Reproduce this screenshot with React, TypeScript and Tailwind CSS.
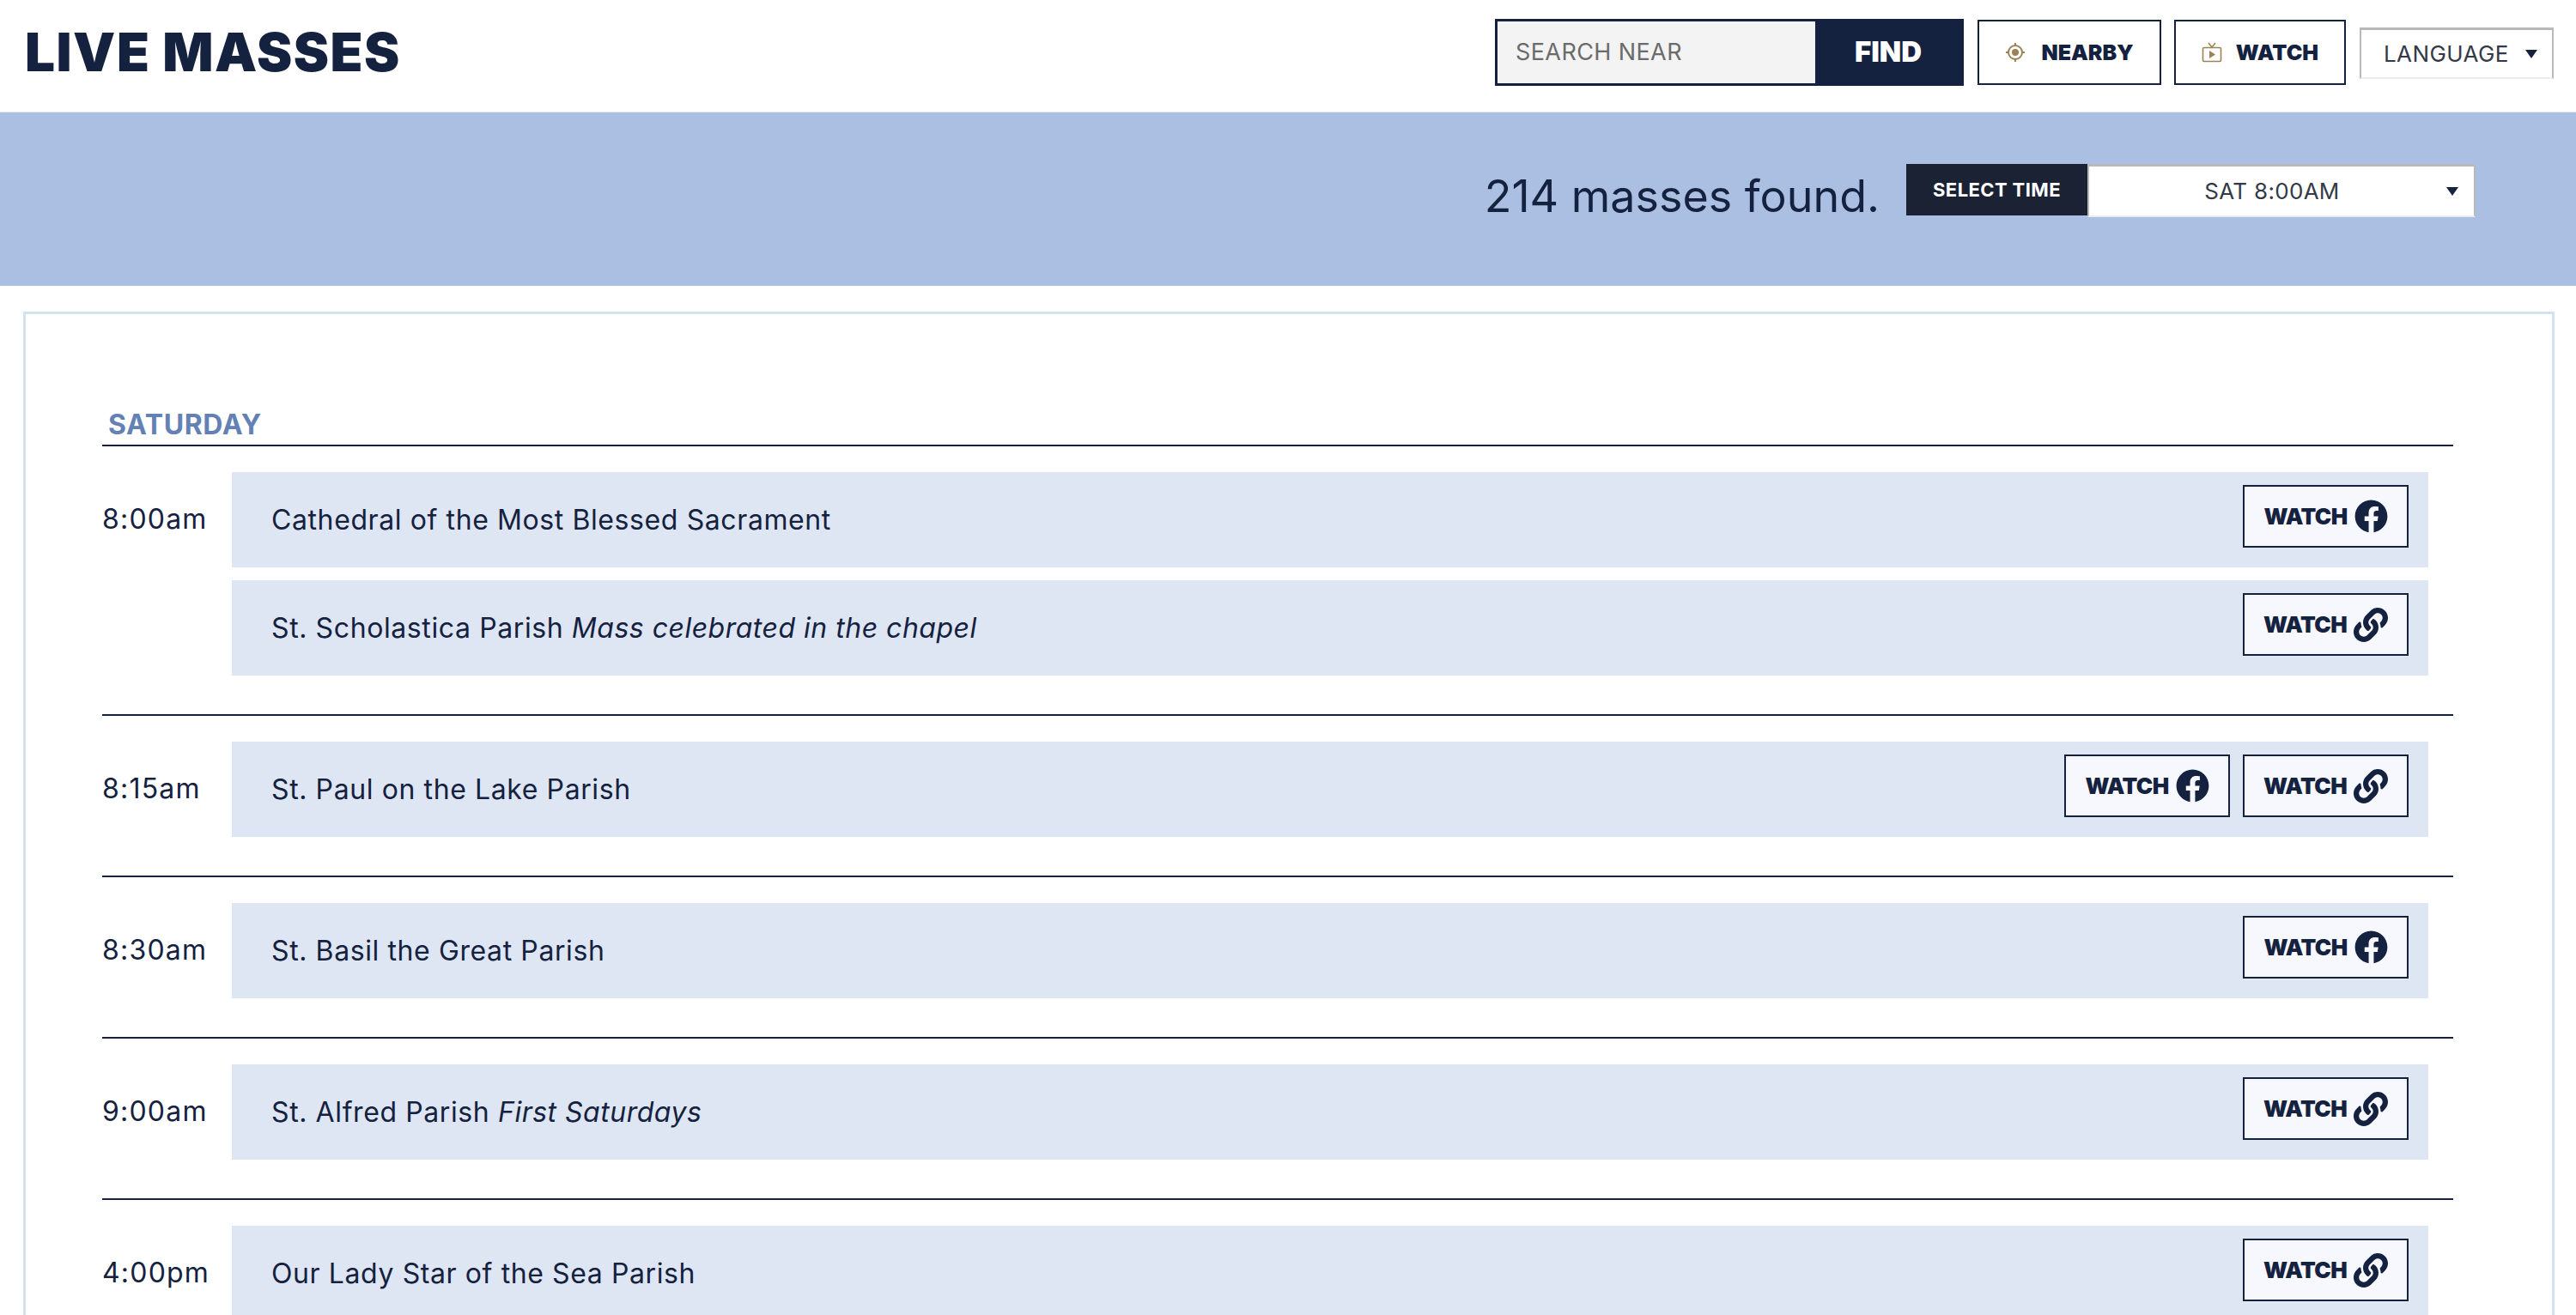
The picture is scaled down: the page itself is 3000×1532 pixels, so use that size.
import { FaFacebook, FaLink } from "react-icons/fa";

const font = { fontFamily: "Inter, 'Liberation Sans', sans-serif" };

type Mass = { name: string; note?: string; fb?: boolean; link?: boolean };
type Slot = { time: string; masses: Mass[] };

const slots: Slot[] = [
  {
    time: "8:00am",
    masses: [
      { name: "Cathedral of the Most Blessed Sacrament", fb: true },
      { name: "St. Scholastica Parish", note: "Mass celebrated in the chapel", link: true },
    ],
  },
  { time: "8:15am", masses: [{ name: "St. Paul on the Lake Parish", fb: true, link: true }] },
  { time: "8:30am", masses: [{ name: "St. Basil the Great Parish", fb: true }] },
  { time: "9:00am", masses: [{ name: "St. Alfred Parish", note: "First Saturdays", link: true }] },
  { time: "4:00pm", masses: [{ name: "Our Lady Star of the Sea Parish", link: true }] },
];

function Caret() {
  return (
    <svg viewBox="0 0 14 10" className="w-[14px] h-[10px] fill-[#14213f]">
      <polygon points="0,0 14,0 7,10" />
    </svg>
  );
}

function NearbyIcon() {
  return (
    <svg viewBox="0 0 24 24" className="w-[24px] h-[24px] fill-none stroke-[#9c8256] stroke-2">
      <circle cx="12" cy="12" r="8" />
      <circle cx="12" cy="12" r="4" className="fill-[#9c8256] stroke-none" />
      <path d="M12 1v3M12 20v3M1 12h3M20 12h3" />
    </svg>
  );
}

function TvIcon() {
  return (
    <svg viewBox="0 0 24 24" className="w-[24px] h-[24px] fill-none stroke-[#9c8256] stroke-[1.6]">
      <rect x="1.5" y="6.5" width="21" height="16" rx="1.5" />
      <path d="M8 1l4 5 4-5" />
      <polygon points="9,10 9,19 16,14.5" className="fill-[#9c8256] stroke-none" />
    </svg>
  );
}

function WatchButton({ kind }: { kind: "fb" | "link" }) {
  return (
    <a className="w-[193px] h-[73px] flex items-center justify-center gap-[8px] bg-[#f6f8fd] border-[2px] border-[#14213f] text-[#14213f] text-[26px] font-black tracking-[-0.6px]">
      WATCH
      {kind === "fb" ? <FaFacebook className="w-[39px] h-[39px]" /> : <FaLink className="w-[40px] h-[40px]" />}
    </a>
  );
}

function MassRow({ mass }: { mass: Mass }) {
  return (
    <div className="h-[111px] flex justify-between items-start pl-[46px] pr-[23px] bg-[#dfe6f3]">
      <div className="h-full flex items-center text-[32px] tracking-[0.6px] text-[#14213f]">
        <span>
          {mass.name} {mass.note && <em className="tracking-[0.5px]">{mass.note}</em>}
        </span>
      </div>
      <div className="flex gap-[15px] pt-[15px]">
        {mass.fb && <WatchButton kind="fb" />}
        {mass.link && <WatchButton kind="link" />}
      </div>
    </div>
  );
}

function TimeSlot({ slot }: { slot: Slot }) {
  return (
    <div className="flex pt-[30px] pb-[45px] border-t-[2px] border-[#14213f]">
      <div className="w-[151px] shrink-0 pt-[36px] text-[32px] leading-[38px] tracking-[1.2px] text-[#14213f]">{slot.time}</div>
      <div className="w-[2558px] flex flex-col gap-[15px]">
        {slot.masses.map((m) => (
          <MassRow key={m.name} mass={m} />
        ))}
      </div>
    </div>
  );
}

export default function App() {
  return (
    <div style={font} className="h-[1532px] overflow-hidden bg-white">
      <header className="h-[131px] flex justify-between items-start pl-[29px] pr-[26px] border-b border-[#e4e9f2]">
        <h1 className="mt-[24px] text-[62px] leading-[74px] font-black text-[#14213f] tracking-[1.5px]">LIVE MASSES</h1>
        <div className="flex items-start">
          <form className="mt-[22px] h-[78px] flex border-[3px] border-[#14213f]">
            <div className="w-[370px] flex items-center pl-[21px] bg-[#f3f3f3] text-[27px] tracking-[0.4px] text-[#6b6b6b]">SEARCH NEAR</div>
            <div className="w-[170px] flex items-center justify-center bg-[#14213f] text-white text-[33px] font-black">FIND</div>
          </form>
          <a className="ml-[16px] mt-[23px] w-[214px] h-[76px] flex items-center justify-center gap-[18px] border-[2px] border-[#14213f] text-[#14213f] text-[25px] font-black">
            <NearbyIcon />
            <span className="mt-[2px]">NEARBY</span>
          </a>
          <a className="ml-[15px] mt-[23px] w-[200px] h-[76px] flex items-center justify-center gap-[16px] border-[2px] border-[#14213f] text-[#14213f] text-[25px] font-black">
            <TvIcon />
            <span className="mt-[2px]">WATCH</span>
          </a>
          <div className="ml-[16px] mt-[32px] w-[226px] h-[60px] flex items-center justify-between pl-[26px] pr-[17px] border-[2px] border-t-[3px] border-[#b9b9b9] border-b-[#ececec] text-[26px] tracking-[0.4px] text-[#333a47]">
            LANGUAGE
            <Caret />
          </div>
        </div>
      </header>

      <section className="h-[202px] flex justify-end items-start pr-[117px] pt-[60px] bg-[#abbfe2]">
        <h2 className="mr-[31px] mt-[2px] text-[52px] leading-[72px] text-[#14213f]">214 masses found.</h2>
        <div className="w-[211px] h-[60px] flex items-center justify-center bg-[#1a2233] text-white text-[22px] font-bold tracking-[0.4px]">SELECT TIME</div>
        <div className="relative w-[452px] h-[62px] flex items-center justify-center pr-[22px] bg-white border-[2px] border-t-[3px] border-[#b9b9b9] border-b-[#ececec] text-[26px] tracking-[0.3px] text-[#333a47]">
          SAT 8:00AM
          <span className="absolute right-[18px] top-[24px]">
            <Caret />
          </span>
        </div>
      </section>

      <main className="mt-[30px] ml-[27px] mr-[25px] pt-[107px] pl-[89px] pr-[115px] border-[3px] border-[#d4e2f0]">
        <h3 className="pl-[7px] h-[45px] text-[32px] leading-[44px] font-bold tracking-[0.6px] text-[#6381b4]">SATURDAY</h3>
        {slots.map((s) => (
          <TimeSlot key={s.time} slot={s} />
        ))}
      </main>
    </div>
  );
}
